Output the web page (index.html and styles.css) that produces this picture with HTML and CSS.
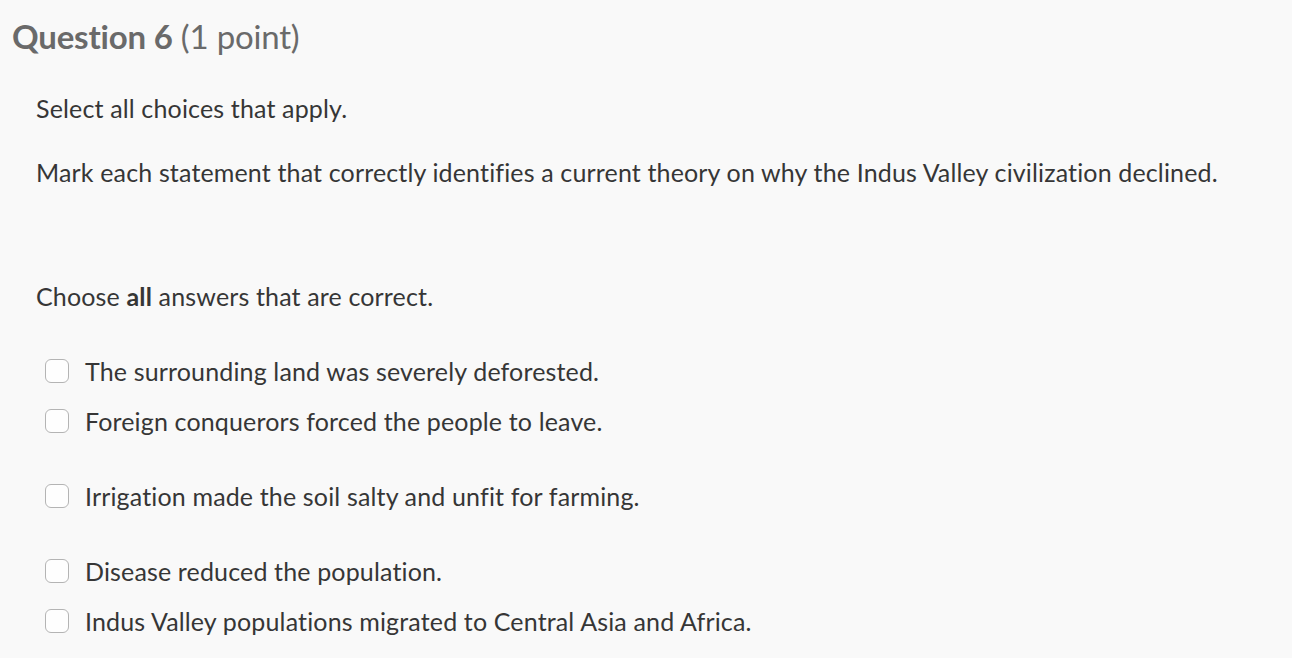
FILE: index.html
```html
<!DOCTYPE html>
<html>
<head>
<meta charset="utf-8">
<link rel="stylesheet" href="styles.css">
</head>
<body>
<div class="question">
  <h2 class="q-title"><span class="q-num">Question 6</span> (1 point)</h2>
  <div class="q-body">
    <p class="p1">Select all choices that apply.</p>
    <p class="p2">Mark each statement that correctly identifies a current theory on why the Indus Valley civilization declined.</p>
    <p class="p3">Choose <strong>all</strong> answers that are correct.</p>
    <ul class="options">
      <li class="opt"><span class="box"></span><span>The surrounding land was severely deforested.</span></li>
      <li class="opt"><span class="box"></span><span>Foreign conquerors forced the people to leave.</span></li>
      <li class="opt gap"><span class="box"></span><span>Irrigation made the soil salty and unfit for farming.</span></li>
      <li class="opt gap"><span class="box"></span><span>Disease reduced the population.</span></li>
      <li class="opt"><span class="box"></span><span>Indus Valley populations migrated to Central Asia and Africa.</span></li>
    </ul>
  </div>
</div>
</body>
</html>
```
FILE: styles.css
```css
html, body {
  margin: 0;
  padding: 0;
  background: #f9f9f9;
}
body {
  font-family: Lato, "Noto Sans", sans-serif;
  color: #363636;
}
.question {
  padding: 16px 0 0 12px;
}
.q-title {
  margin: 0;
  font-size: 33px;
  font-weight: 400;
  color: #6a6a6a;
  line-height: 40px;
  letter-spacing: -0.2px;
}
.q-num {
  font-weight: 700;
}
.q-body {
  padding-left: 24px;
}
.q-body p {
  margin: 0;
  font-size: 25px;
  line-height: 30px;
  letter-spacing: 0.15px;
}
.p1 { margin-top: 37px !important; }
.p2 { margin-top: 34px !important; }
.p3 { margin-top: 94px !important; }
.options {
  list-style: none;
  margin: 45px 0 0 0;
  padding: 0 0 0 8px;
  font-size: 25px;
  letter-spacing: 0.15px;
}
.opt {
  display: flex;
  align-items: center;
  gap: 16px;
  height: 30px;
  margin-bottom: 20px;
}
.opt.gap {
  margin-top: 45px;
}
.box {
  width: 24px;
  height: 24px;
  box-sizing: border-box;
  border: 1.5px solid #b4b4b4;
  border-radius: 6px;
  background: #fefefe;
  flex: none;
  margin-left: 1px;
}
```
